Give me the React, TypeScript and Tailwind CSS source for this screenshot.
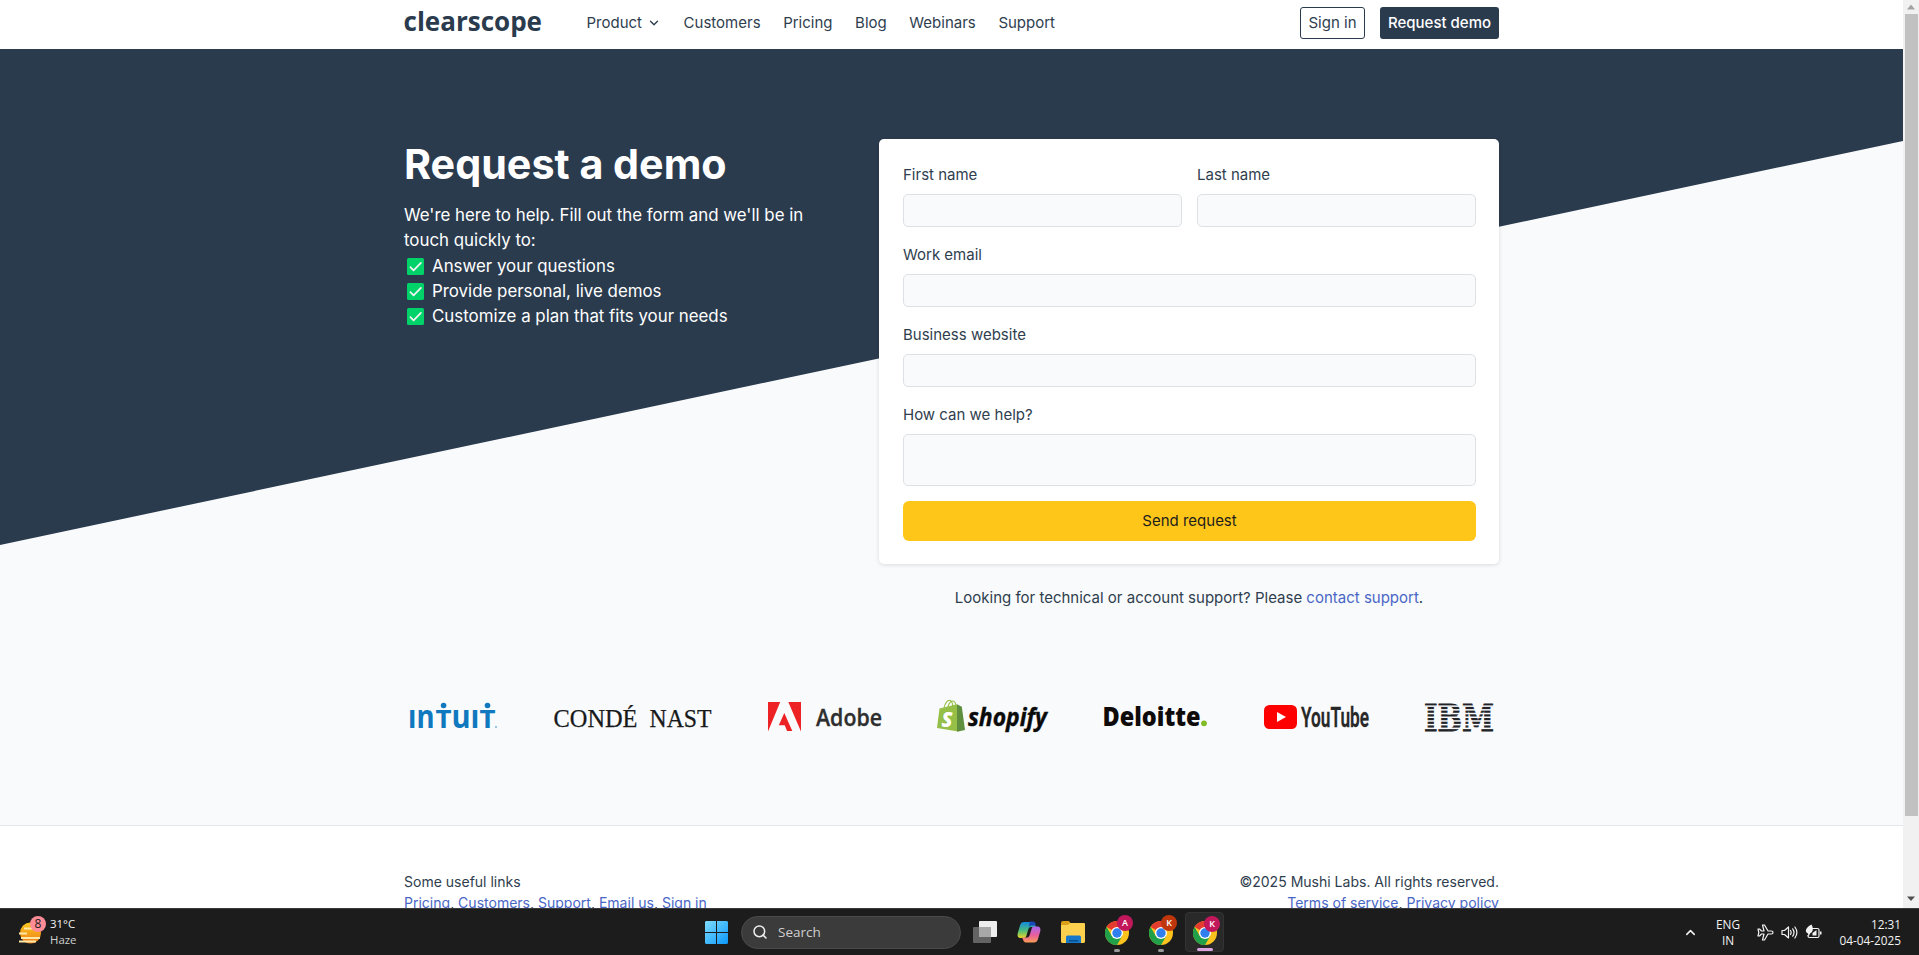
import type { ReactNode } from 'react';
import { ChevronDown, ChevronUp, Search } from 'lucide-react';

const navLinks = ['Customers', 'Pricing', 'Blog', 'Webinars', 'Support'];
const benefits = ['Answer your questions', 'Provide personal, live demos', 'Customize a plan that fits your needs'];
const footerLinks = ['Pricing', 'Customers', 'Support', 'Email us', 'Sign in'];

function Wordmark() {
  return (
    <svg className="block h-[46px] w-[138px] shrink-0 overflow-visible" viewBox="0 0 138 46" fill="#2b3b4e">
      <text x="-0.5" y="31" fontFamily="'Open Sans', sans-serif" fontWeight="700" fontSize="27.5" textLength="138.5" lengthAdjust="spacingAndGlyphs">clearscope</text>
    </svg>
  );
}

function Header() {
  return (
    <header className="flex h-[49px] shrink-0 items-start bg-white px-[404px] text-[15px] text-[#2f3e4e]">
      <div className="flex h-[46px] w-full items-center">
        <Wordmark />
        <nav className="ml-[44.5px] flex items-center gap-[22.6px]">
          <a className="flex items-center gap-[5px]">Product <ChevronDown className="size-[14px]" strokeWidth={2.3} /></a>
          {navLinks.map((l) => <a key={l}>{l}</a>)}
        </nav>
        <div className="ml-auto flex gap-[15px]">
          <a className="flex h-8 w-[65px] items-center justify-center rounded-[3px] border border-[#2b3b4e]">Sign in</a>
          <a className="flex h-8 w-[119px] items-center justify-center rounded-[3px] bg-[#2b3b4e] font-medium text-white">Request demo</a>
        </div>
      </div>
    </header>
  );
}

function CheckMark() {
  return (
    <svg className="ml-[3px] mr-2 size-[17px]" viewBox="0 0 17 17">
      <rect width="17" height="17" rx="1.6" fill="#00d26a" />
      <path d="M3.4 9.2 6.6 12.3 13.9 4.9" fill="none" stroke="#f4f4f4" strokeWidth="1.7" strokeLinecap="round" strokeLinejoin="round" />
    </svg>
  );
}

function Field({ label, tall = false }: { label: string; tall?: boolean }) {
  return (
    <label className="flex flex-1 flex-col gap-[7px] leading-6">
      {label}
      {tall
        ? <textarea className="block h-[52px] resize-none rounded-[5px] border border-[#dde1e6] bg-[#f9fafc]" />
        : <input className="block h-[33px] min-w-0 rounded-[5px] border border-[#dde1e6] bg-[#f9fafc]" />}
    </label>
  );
}

function DemoForm() {
  return (
    <form className="flex h-[425px] flex-col gap-4 rounded-[5px] bg-white pl-6 pr-[23px] pt-6 shadow-[0_1px_4px_rgba(0,0,0,0.13)]">
      <div className="flex gap-[15px]">
        <Field label="First name" />
        <Field label="Last name" />
      </div>
      <div className="flex"><Field label="Work email" /></div>
      <div className="flex"><Field label="Business website" /></div>
      <div className="flex"><Field label="How can we help?" tall /></div>
      <button type="button" className="-mt-px h-10 shrink-0 rounded-[6px] bg-[#ffc61a] text-[#1d1d1d]">Send request</button>
    </form>
  );
}

function Logos() {
  return (
    <div className="flex h-[36px] justify-between pl-[5px] pr-[6px]">
      <svg className="h-9 w-[89px] overflow-visible" viewBox="0 0 89 36" fill="#0f78be">
        <text y="29" fontFamily="'Open Sans', sans-serif" fontWeight="700" fontSize="33">
          <tspan x="-1" textLength="26.5" lengthAdjust="spacingAndGlyphs">ın</tspan>
          <tspan x="26.5" fontSize="25" textLength="16" lengthAdjust="spacingAndGlyphs">T</tspan>
          <tspan x="42.5" textLength="28" lengthAdjust="spacingAndGlyphs">uı</tspan>
          <tspan x="70.5" fontSize="25" textLength="16" lengthAdjust="spacingAndGlyphs">T</tspan>
        </text>
        <circle cx="34.6" cy="6.5" r="2.8" />
        <circle cx="78.5" cy="6.5" r="2.8" />
        <circle cx="87" cy="28" r="0.9" opacity=".6" />
      </svg>
      <svg className="h-9 w-[158px] overflow-visible" viewBox="0 0 158 36" fill="#17191b" stroke="#17191b" strokeWidth="0.25">
        <g fontFamily="'Liberation Serif', serif" fontSize="24.5">
          <text x="-0.5" y="28" textLength="84" lengthAdjust="spacingAndGlyphs">CONDÉ</text>
          <text x="95.5" y="28" textLength="62" lengthAdjust="spacingAndGlyphs">NAST</text>
        </g>
      </svg>
      <svg className="h-9 w-[114px] overflow-visible" viewBox="0 0 114 36">
        <path d="M0 3h12.2L0 32.5zM20.3 3H33v29.5zM16.3 14l8 18h-5.2l-2.4-5.8h-5.9z" fill="#ed2224" />
        <text x="48" y="26.5" fill="#2f2e2e" stroke="#2f2e2e" strokeWidth="0.3" fontFamily="'Open Sans', sans-serif" fontWeight="600" fontSize="23" textLength="66" lengthAdjust="spacingAndGlyphs">Adobe</text>
      </svg>
      <svg className="h-9 w-[111px] overflow-visible" viewBox="0 0 111 36">
        <path d="M2.5 9.5 20 5.2l1.2 27.3L0 29z" fill="#95bf47" />
        <path d="m20 5.2 4.8 2.6L28 31l-8 1.8z" fill="#5e8e3e" />
        <path d="M7 9c1-5.5 4-8.5 6.3-7.4C15.5 2.8 15.7 6 15.7 8M11 8c.8-4.5 3.6-6.8 5.7-5.7C18.2 3 18.8 5 18.8 6.3" fill="none" stroke="#95bf47" strokeWidth="1.1" />
        <text x="4.5" y="27.5" fill="#fff" fontFamily="'Open Sans', sans-serif" fontWeight="800" fontStyle="italic" fontSize="21" textLength="11" lengthAdjust="spacingAndGlyphs">S</text>
        <text x="31" y="26.5" fill="#0b0b0b" fontFamily="'Open Sans', sans-serif" fontWeight="700" fontStyle="italic" fontSize="25.5" textLength="79" lengthAdjust="spacingAndGlyphs" stroke="#0b0b0b" strokeWidth="0.4">shopify</text>
      </svg>
      <svg className="h-9 w-[104px] overflow-visible" viewBox="0 0 104 36">
        <text x="-1.5" y="27" fill="#0f0b0b" fontFamily="'Open Sans', sans-serif" fontWeight="800" fontSize="26.5" textLength="98" lengthAdjust="spacingAndGlyphs">Deloitte</text>
        <circle cx="100" cy="24.3" r="2.9" fill="#81bc27" />
      </svg>
      <svg className="h-9 w-[105px] overflow-visible" viewBox="0 0 105 36">
        <rect y="6" width="33" height="24" rx="5.5" fill="#fe0000" />
        <path d="m13 13 9 5-9 5z" fill="#fff" />
        <text x="37" y="28" fill="#282828" stroke="#282828" strokeWidth="0.3" fontFamily="Roboto, sans-serif" fontWeight="600" fontSize="28" textLength="68" lengthAdjust="spacingAndGlyphs">YouTube</text>
      </svg>
      <svg className="h-9 w-[68px] overflow-visible" viewBox="0 0 68 36">
        <text x="-1" y="32" fill="#222327" stroke="#222327" strokeWidth="1" fontFamily="'DejaVu Serif', serif" fontWeight="700" fontSize="37.5" textLength="70" lengthAdjust="spacingAndGlyphs">IBM</text>
        {[6.4, 10.1, 13.8, 17.5, 21.2, 24.9, 28.6].map((y) => <rect key={y} x="-1" y={y} width="70" height="1.5" fill="#f9fafc" />)}
      </svg>
    </div>
  );
}

function LinkList({ items }: { items: string[] }) {
  return (
    <p>
      {items.map((t, i) => (
        <span key={t}>
          {i > 0 && ', '}
          <a className="text-[#4a66c5]">{t}</a>
        </span>
      ))}
    </p>
  );
}

function ScrollBar() {
  return (
    <div className="flex w-4 shrink-0 flex-col items-center bg-[#f1f1f1]">
      <svg className="h-[14px] w-4 shrink-0" viewBox="0 0 16 14"><path d="m8 4.5 4 5H4z" fill="#a3a3a3" /></svg>
      <div className="h-[802px] w-[13px] shrink-0 bg-[#c1c1c1]" />
      <svg className="mb-1 mt-auto h-[12px] w-4" viewBox="0 0 16 12"><path d="m8 9 4-4.5H4z" fill="#505050" /></svg>
    </div>
  );
}

function ChromeIcon({ letter, color, active = false }: { letter: string; color: string; active?: boolean }) {
  const box = active ? 'bg-[#292929] border border-[#333] rounded-[4px]' : '';
  const bar = active ? 'w-4 bg-[#dda5e0]' : 'w-[6px] bg-[#9a9a9a]';
  return (
    <div className={`relative flex h-10 w-[39px] shrink-0 items-center justify-center ${box}`}>
      <svg className="mt-px size-6" viewBox="0 0 24 24">
        <circle cx="12" cy="12" r="12" fill="#fcc31e" />
        <path d="M12 12 1.6 6A12 12 0 0 1 22.4 6z" fill="#e33b2e" />
        <path d="M1.6 6A12 12 0 0 0 12 24l5.2-9L12 12 6.8 15z" fill="#21a04a" />
        <circle cx="12" cy="12" r="6" fill="#fff" />
        <circle cx="12" cy="12" r="4.7" fill="#2f80ee" />
      </svg>
      <span className={`absolute right-[3px] top-[3px] flex size-4 items-center justify-center rounded-full text-[9px] font-semibold text-white ${color}`}>{letter}</span>
      <span className={`absolute bottom-0 h-[3px] rounded-full ${bar}`} />
    </div>
  );
}

function TwoLines({ children, className }: { children: ReactNode; className: string }) {
  return <div className={`flex flex-col leading-4 ${className}`}>{children}</div>;
}

function Taskbar() {
  return (
    <footer className="flex h-[47px] items-center border-t border-[#3a3a3a] bg-[#1c1c1c] font-['Open_Sans',sans-serif] text-[11.8px] text-[#f3f3f3]">
      <svg className="ml-[18px] h-[32px] w-[30px] shrink-0" viewBox="0 0 30 32">
        <defs><linearGradient id="sun" x1="0" y1="0" x2="0" y2="1"><stop stopColor="#fbc91b" /><stop offset="1" stopColor="#ee7d19" /></linearGradient></defs>
        <circle cx="12.5" cy="17" r="10.5" fill="url(#sun)" />
        <path d="M6 12.5h16M1 17.5h8M3 22h19M1 25.5h17" stroke="#ffe7a8" strokeWidth="1.8" />
        <circle cx="20" cy="8" r="8" fill="#fc8d97" />
        <text x="20" y="12.2" textAnchor="middle" fontSize="12" fontWeight="500" fill="#1b1b1b">8</text>
      </svg>
      <TwoLines className="ml-[2px] w-[60px]"><span className="text-[11.4px]">31°C</span><span className="text-[11.4px] text-[#cfcfcf]">Haze</span></TwoLines>
      <div className="ml-[595px] flex items-center">
        <svg className="size-[23px] shrink-0" viewBox="0 0 23 23">
          <defs><linearGradient id="win" x1="0" y1="0" x2="1" y2="1"><stop stopColor="#7fdcff" /><stop offset="1" stopColor="#0a98fb" /></linearGradient></defs>
          <path d="M1 0h10v11H0V1zM12 0h10l1 1v10H12zM0 12h11v11H1l-1-1zM12 12h11v10l-1 1H12z" fill="url(#win)" />
        </svg>
        <div className="ml-[13px] flex h-[33px] w-[220px] items-center rounded-full border border-[#4b4b4b] bg-[#3b3b3b] pl-[10px] text-[13.5px] text-[#cfcfcf]">
          <Search className="mr-[10px] size-[16px] text-[#eeeeee]" strokeWidth={2.3} />Search
        </div>
        <svg className="ml-3 size-6 shrink-0" viewBox="0 0 24 24">
          <rect y="7" width="18" height="16" rx="1" fill="#636363" />
          <rect x="6" y="1" width="18" height="16" rx="1" fill="#eeeeee" />
          <path d="M6 7h12v10H6z" fill="#a8a8a8" />
        </svg>
        <svg className="ml-[20px] size-6 shrink-0" viewBox="0 0 24 24">
          <defs>
            <linearGradient id="cpA" x1="0" y1="0" x2="0" y2="1"><stop stopColor="#128ce0" /><stop offset=".55" stopColor="#4fbd78" /><stop offset="1" stopColor="#ead525" /></linearGradient>
            <linearGradient id="cpB" x1="0" y1="0" x2="0" y2="1"><stop stopColor="#a966ef" /><stop offset=".55" stopColor="#e8609a" /><stop offset="1" stopColor="#fc9c54" /></linearGradient>
          </defs>
          <path d="M7 2h8c3 0 3 5 4.5 5H14c-2 0-2.6 2-3.2 4L9.3 16c-.6 1.7-1.6 2-3 2H4c-3 0-4-2-3.2-5L3 5.5C3.7 3 5 2 7 2z" fill="url(#cpA)" />
          <path d="M13 1.5h3c2 0 2.4 1.5 3 4H14c-1 0-2 .7-2.4 2z" fill="#1748b8" />
          <path d="M17 22.5H9c-3 0-3-5-4.5-5H10c2 0 2.6-2 3.2-4L14.7 8.5c.6-1.7 1.6-2 3-2H20c3 0 4 2 3.2 5L21 19c-.7 2.5-2 3.5-4 3.5z" fill="url(#cpB)" />
        </svg>
        <svg className="ml-[20px] size-6 shrink-0" viewBox="0 0 24 24">
          <path d="M0 3q0-2 2-2h6l2 3h12q2 0 2 2v15q0 2-2 2H2q-2 0-2-2z" fill="#dca018" />
          <path d="M0 6q0-1 1-1h6l2-2h14q1 0 1 1v17q0 2-2 2H2q-2 0-2-2z" fill="#fdd04e" />
          <path d="M5 23v-6q0-1.5 1.5-1.5h12Q20 15.5 20 17v6z" fill="#1777c9" />
          <path d="M8 20h9v1.5H8z" fill="#07508f" />
        </svg>
        <div className="ml-[12px] flex items-center gap-[5px]">
          <ChromeIcon letter="A" color="bg-[#c2185b]" />
          <ChromeIcon letter="K" color="bg-[#bf360c]" />
          <ChromeIcon letter="K" color="bg-[#c2185b]" active />
        </div>
      </div>
      <div className="ml-auto mr-[18px] flex items-center">
        <ChevronUp className="mr-[18px] size-[15px]" strokeWidth={2.4} />
        <TwoLines className="mr-[17px] w-6 items-center"><span>ENG</span><span>IN</span></TwoLines>
        <svg className="mr-[7px] size-[17px]" viewBox="0 0 17 17" fill="none" stroke="#f3f3f3" strokeWidth="1.2" strokeLinejoin="round">
          <path d="M1 5h1.5L4.5 7H7L5.5 1h2L11 7h3.5a1.5 1.5 0 0 1 0 3H11l-3.500 6h-2L7 10H4.500L2.500 12H1l.8-3.500z" />
        </svg>
        <svg className="mr-[7px] size-[17px]" viewBox="0 0 17 17" fill="none" stroke="#f3f3f3" strokeWidth="1.2" strokeLinejoin="round" strokeLinecap="round">
          <path d="M1 6.5h2.5L7.5 3v11L3.5 10.5H1zM9.5 6.5q1.3 2 0 4M11.7 4.8q2.6 3.7 0 7.4M13.9 3q4 5.5 0 11" />
        </svg>
        <svg className="mr-[10px] h-[17px] w-[17px]" viewBox="0 0 17 17">
          <path d="M6 4.5h6.5q1.5 0 1.5 1.5v6q0 1.5-1.5 1.5h-8Q3 13.5 3 12v-1" fill="none" stroke="#f3f3f3" strokeWidth="1.2" />
          <path d="M15 7.5h1.5v3H15zM7.5 11.5V9l4-3v5.5z" fill="#f3f3f3" />
          <path d="M6.5.5C8.5 4 8.5 8 5 9.5L3.5 13 3 9.5C-.5 8 0 4 6.5.5z" fill="#f3f3f3" />
        </svg>
        <TwoLines className="w-[69px] items-end whitespace-nowrap"><span>12:31</span><span>04-04-2025</span></TwoLines>
      </div>
    </footer>
  );
}

export default function App() {
  return (
    <div className="flex h-[955px] w-[1919px] flex-col overflow-hidden bg-white font-[Inter,sans-serif] text-[15px] text-[#2f3e4e]">
      <div className="flex h-[908px] shrink-0 overflow-hidden">
        <main className="flex w-[1903px] shrink-0 flex-col">
          <Header />
          <section className="relative h-[777px] shrink-0 border-b border-[#e4e8ed] bg-[#f9fafc]">
            <div className="absolute inset-x-0 top-0 h-[496px] bg-[#2b3b4e] [clip-path:polygon(0_0,100%_0,100%_92px,0_100%)]" />
            <div className="relative px-[404px] pt-[90px]">
              <div className="flex justify-between">
                <div className="w-[420px] text-[16.875px] leading-[25.3px] text-white">
                  <h1 className="mb-[14px] text-[41.25px] font-bold leading-[50px]">Request a demo</h1>
                  <p>We're here to help. Fill out the form and we'll be in touch quickly to:</p>
                  <ul>
                    {benefits.map((b) => <li key={b} className="flex items-center"><CheckMark />{b}</li>)}
                  </ul>
                </div>
                <div className="w-[620px]">
                  <DemoForm />
                  <p className="mt-[22px] text-center leading-6">
                    Looking for technical or account support? Please <a className="text-[#4a66c5]">contact support</a>.
                  </p>
                </div>
              </div>
              <div className="mt-[89px]"><Logos /></div>
            </div>
          </section>
          <div className="flex justify-between px-[404px] pt-[45px] text-[14.03px] leading-[21px]">
            <div>
              <p>Some useful links</p>
              <LinkList items={footerLinks} />
            </div>
            <div className="text-right">
              <p>©2025 Mushi Labs. All rights reserved.</p>
              <LinkList items={['Terms of service', 'Privacy policy']} />
            </div>
          </div>
        </main>
        <ScrollBar />
      </div>
      <Taskbar />
    </div>
  );
}
